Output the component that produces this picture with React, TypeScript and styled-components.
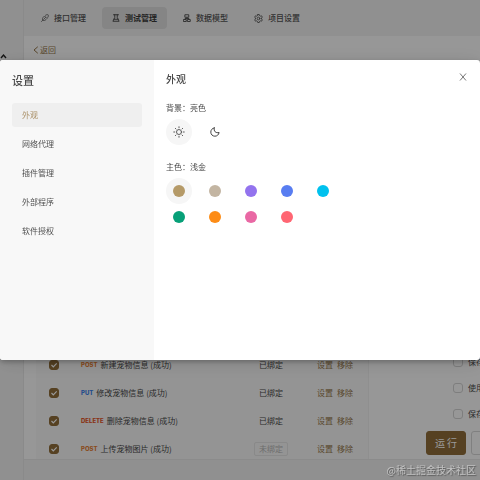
import React, { useState } from "react";
import styled, { createGlobalStyle } from "styled-components";

const GlobalStyle = createGlobalStyle`
  *, *::before, *::after { box-sizing: border-box; }
  body {
    margin: 0;
    overflow: hidden;
    background: #f1f1f1;
    color: #484848;
    font: 8px/12px "Noto Sans CJK SC", "Noto Sans", sans-serif;
  }
  button, input { font: inherit; color: inherit; margin: 0; }
  button { border: 0; padding: 0; background: none; cursor: pointer; }
  h1, h2, h3 { margin: 0; }
  svg { display: block; flex: none; }
`;

const Shell = styled.div`
  display: grid;
  grid-template-columns: 24px minmax(0, 1fr);
  grid-template-rows: minmax(0, 1fr);
  height: 100vh;
`;
const Rail = styled.aside`
  padding-top: 53px;
  border-right: 1px solid #e6e6e6;
`;
const Workspace = styled.div`
  display: grid;
  grid-template-rows: 36px minmax(0, 1fr) 21px;
  min-width: 0;
`;
const TopNav = styled.nav`
  display: flex;
  align-items: center;
  gap: 6px;
  padding-left: 7px;
`;
const NavTab = styled.button<{ $active?: boolean }>`
  display: flex;
  align-items: center;
  gap: 5px;
  height: 22px;
  padding: 0 10px;
  border-radius: 4px;
  white-space: nowrap;
  font-size: 8px;
  font-weight: ${(p) => (p.$active ? 700 : 500)};
  color: ${(p) => (p.$active ? "#3a3a3a" : "#505050")};
  background: ${(p) => (p.$active ? "#dedede" : "transparent")};
`;
const Content = styled.main`
  display: grid;
  grid-template-rows: 28px minmax(0, 1fr);
  background: #fcfcfc;
  overflow: hidden;
`;
const BackLink = styled.a`
  display: flex;
  align-items: center;
  gap: 2px;
  padding-left: 9px;
  color: #94764a;
  text-decoration: none;
`;
const Panels = styled.div`
  display: grid;
  grid-template-columns: minmax(0, 345fr) minmax(0, 111fr);
  grid-template-rows: minmax(0, 1fr);
  min-height: 0;
`;
const StepsPanel = styled.section`
  margin-left: 12px;
  padding-top: 287px;
  background: #f7f7f7;
  border-right: 1px solid #eeeeee;
  overflow: hidden;
`;
const StepTable = styled.table`
  width: 100%;
  table-layout: fixed;
  border-collapse: collapse;
  td { height: 28px; padding: 0; white-space: nowrap; }
`;
const CheckCell = styled.td`
  width: 45px;
  padding-left: 13px !important;
`;
const StatusCell = styled.td`
  width: 63px;
`;
const ActionCell = styled.td`
  width: 51px;
`;
const Check = styled.input`
  appearance: none;
  display: block;
  flex: none;
  width: 10px;
  height: 10px;
  border: 1px solid #d2d2d2;
  border-radius: 3px;
  background: #fcfcfc;
  &:checked {
    border-color: #8f6d3a;
    background: #8f6d3a
      url("data:image/svg+xml,%3Csvg xmlns='http://www.w3.org/2000/svg' viewBox='0 0 8 8'%3E%3Cpath d='M1.5 4l1.8 1.8L6.7 2.4' fill='none' stroke='white' stroke-width='1.2'/%3E%3C/svg%3E")
      center / 8px 8px no-repeat;
  }
`;
const Step = styled.div`
  display: flex;
  align-items: center;
  gap: 3px;
`;
const Method = styled.span<{ $color: string }>`
  font: 800 6px/12px Inter, sans-serif;
  color: ${(p) => p.$color};
`;
const Tag = styled.span<{ $muted?: boolean }>`
  display: inline-block;
  padding: 0 4px;
  line-height: 12px;
  border: 1px solid ${(p) => (p.$muted ? "#e4e4e4" : "transparent")};
  border-radius: 2px;
  color: ${(p) => (p.$muted ? "#b6b6b6" : "#484848")};
`;
const Actions = styled.div`
  display: flex;
  gap: 4px;
`;
const TextButton = styled.button`
  color: #94764a;
`;
const RunPanel = styled.section`
  padding-top: 285px;
  overflow: hidden;
`;
const Option = styled.label`
  display: flex;
  align-items: center;
  gap: 5px;
  height: 26px;
  padding-left: 84px;
  white-space: nowrap;
`;
const RunBar = styled.div`
  display: flex;
  gap: 5px;
  margin-top: 4px;
  padding-left: 57px;
`;
const RunButton = styled.button<{ $primary?: boolean }>`
  flex: none;
  width: 40px;
  height: 24px;
  border: 1px solid ${(p) => (p.$primary ? "#8f6d3a" : "#d6d6d6")};
  border-radius: 3px;
  background: ${(p) => (p.$primary ? "#8f6d3a" : "#fcfcfc")};
  color: ${(p) => (p.$primary ? "#fff" : "#444")};
  font-size: 10px;
`;
const Footer = styled.footer`
  border-top: 1px solid #e8e8e8;
`;

const Backdrop = styled.div`
  position: fixed;
  inset: 0;
  padding-top: 60px;
  background: rgba(0, 0, 0, 0.4);
`;
const Dialog = styled.div`
  display: grid;
  grid-template-columns: 154px minmax(0, 1fr);
  min-height: 300px;
  border-radius: 3px;
  overflow: hidden;
  background: #fff;
  box-shadow: 0 2px 5px rgba(0, 0, 0, 0.25), 0 3px 20px rgba(0, 0, 0, 0.12);
`;
const Sidebar = styled.div`
  padding: 12px 12px 0;
  background: #f8f8f8;
`;
const DialogTitle = styled.h1`
  font-size: 11px;
  line-height: 16px;
  font-weight: 500;
  margin-bottom: 15px;
`;
const Menu = styled.nav`
  display: flex;
  flex-direction: column;
  gap: 5px;
`;
const MenuItem = styled.button<{ $active: boolean }>`
  height: 24px;
  padding: 0 10px;
  border-radius: 3px;
  text-align: left;
  font-size: 8px;
  color: ${(p) => (p.$active ? "#a98f66" : "#505050")};
  background: ${(p) => (p.$active ? "#efefef" : "transparent")};
`;
const Pane = styled.div`
  padding: 12px;
`;
const PaneHead = styled.header`
  display: flex;
  justify-content: space-between;
  align-items: center;
  height: 14px;
`;
const PaneTitle = styled.h2`
  font-size: 10px;
  line-height: 14px;
  font-weight: 500;
`;
const CloseButton = styled.button`
  display: grid;
  place-items: center;
  width: 10px;
  height: 10px;
  margin-top: -4px;
`;
const FieldTitle = styled.h3`
  margin-top: 16px;
  margin-bottom: 5px;
  font-size: 8px;
  line-height: 12px;
  font-weight: 400;
`;
const Choices = styled.div`
  display: grid;
  grid-template-columns: repeat(5, 26px);
  column-gap: 10px;
`;
const Choice = styled.button<{ $active?: boolean }>`
  display: grid;
  place-items: center;
  width: 26px;
  height: 26px;
  border-radius: 50%;
  background: ${(p) => (p.$active ? "#f6f6f6" : "transparent")};
`;
const Swatch = styled.span<{ $color: string }>`
  width: 12px;
  height: 12px;
  border-radius: 50%;
  background: ${(p) => p.$color};
`;
const Watermark = styled.div`
  position: fixed;
  right: 4px;
  bottom: 2px;
  font-size: 10px;
  line-height: 16px;
  color: #c2c2c2;
  text-shadow: 1px 1px 1px #555;
`;

const stroke = { fill: "none", stroke: "currentColor", strokeLinecap: "round", strokeLinejoin: "round" } as const;

const ApiIcon = () => (
  <svg width="8" height="8" viewBox="0 0 16 16" {...stroke} strokeWidth="1.5">
    <path d="M1 15l3-3M4 12c-2-2-1-4 1-6l2-2 5 5-2 2c-2 2-4 3-6 1zM9 2.5c2-1.5 4-1.5 5.3-.8.7 1.3.7 3.3-.8 5.3M6 10l3-3" />
  </svg>
);
const FlaskIcon = () => (
  <svg width="8" height="8" viewBox="0 0 16 16" {...stroke} strokeWidth="1.7">
    <path d="M3 1.5h10M5.5 1.5V7L1.8 14.5h12.4L10.5 7V1.5M4 10.5h8" />
  </svg>
);
const ModelIcon = () => (
  <svg width="8" height="8" viewBox="0 0 16 16" {...stroke} strokeWidth="1.9">
    <path d="M4.5 1.5h7v5h-7zM8 6.5v2.5M4 11V9h8v2M1.5 11h5v4h-5zM9.5 11h5v4h-5z" />
  </svg>
);
const GearIcon = () => (
  <svg width="9" height="9" viewBox="0 0 18 18" {...stroke} strokeWidth="1.7">
    <path d="M7.5 1h3l.6 2.3 1.7 1 2.3-.7 1.5 2.6L15 8v2l1.6 1.8-1.5 2.6-2.3-.7-1.7 1-.6 2.3h-3l-.6-2.3-1.7-1-2.3.7-1.5-2.6L3 10V8L1.4 6.2l1.5-2.6 2.3.7 1.7-1z" />
    <circle cx="9" cy="9" r="2.7" />
  </svg>
);
const SunIcon = () => (
  <svg width="12" height="12" viewBox="0 0 24 24" {...stroke} stroke="#555" strokeWidth="1.9">
    <circle cx="12" cy="12" r="5" />
    <path d="M12 1.5v2M12 20.5v2M1.5 12h2M20.5 12h2M4.6 4.6L6 6M18 18l1.4 1.4M19.4 4.6L18 6M6 18l-1.4 1.4" />
  </svg>
);
const MoonIcon = () => (
  <svg width="10" height="10" viewBox="0 0 20 20" {...stroke} stroke="#444" strokeWidth="2">
    <path d="M8.5 1.8C6.8 8.5 11.5 12.8 18.2 11 17.4 15.6 14 18.4 9.8 18.4 5 18.4 1.6 14.8 1.6 10.2 1.6 6 4.2 2.6 8.5 1.8z" />
  </svg>
);

const tabs = [
  { label: "接口管理", Icon: ApiIcon },
  { label: "测试管理", Icon: FlaskIcon, active: true },
  { label: "数据模型", Icon: ModelIcon },
  { label: "项目设置", Icon: GearIcon },
];
const steps = [
  { method: "POST", color: "#e57f35", name: "新建宠物信息 (成功)", bound: true },
  { method: "PUT", color: "#3a80e8", name: "修改宠物信息 (成功)", bound: true },
  { method: "DELETE", color: "#e4552a", name: "删除宠物信息 (成功)", bound: true },
  { method: "POST", color: "#e57f35", name: "上传宠物图片 (成功)", bound: false },
];
const options = ["保存请求", "使用全局", "保存变量"];
const menu = ["外观", "网络代理", "插件管理", "外部程序", "软件授权"];
const colors = [
  { name: "浅金", value: "#b59a68" },
  { name: "浅灰", value: "#c3b5a2" },
  { name: "紫色", value: "#9373ee" },
  { name: "蓝色", value: "#587df1" },
  { name: "青色", value: "#00c1ee" },
  { name: "绿色", value: "#07a078" },
  { name: "橙色", value: "#fd8c16" },
  { name: "粉色", value: "#e968a4" },
  { name: "红色", value: "#ff6673" },
];

export default function App() {
  const [section, setSection] = useState("外观");
  const [dark, setDark] = useState(false);
  const [accent, setAccent] = useState("浅金");

  return (
    <>
      <GlobalStyle />
      <Shell>
        <Rail>
          <svg width="7" height="6" viewBox="0 0 7 6" fill="none" stroke="#222" strokeWidth="1.4">
            <path d="M1 5l2.5-3L6 5" />
          </svg>
        </Rail>
        <Workspace>
          <TopNav>
            {tabs.map(({ label, Icon, active }) => (
              <NavTab key={label} $active={active}>
                <Icon />
                {label}
              </NavTab>
            ))}
          </TopNav>
          <Content>
            <BackLink href="#">
              <svg width="5" height="8" viewBox="0 0 5 8" {...stroke}>
                <path d="M4.5 1L1 4l3.5 3" />
              </svg>
              返回
            </BackLink>
            <Panels>
              <StepsPanel>
                <StepTable>
                  <tbody>
                    {steps.map((s) => (
                      <tr key={s.name}>
                        <CheckCell>
                          <Check type="checkbox" defaultChecked aria-label={s.name} />
                        </CheckCell>
                        <td>
                          <Step>
                            <Method $color={s.color}>{s.method}</Method>
                            {s.name}
                          </Step>
                        </td>
                        <StatusCell>
                          <Tag $muted={!s.bound}>{s.bound ? "已绑定" : "未绑定"}</Tag>
                        </StatusCell>
                        <ActionCell>
                          <Actions>
                            <TextButton>设置</TextButton>
                            <TextButton>移除</TextButton>
                          </Actions>
                        </ActionCell>
                      </tr>
                    ))}
                  </tbody>
                </StepTable>
              </StepsPanel>
              <RunPanel>
                {options.map((o) => (
                  <Option key={o}>
                    <Check type="checkbox" />
                    {o}
                  </Option>
                ))}
                <RunBar>
                  <RunButton $primary>运 行</RunButton>
                  <RunButton aria-label="保存" />
                </RunBar>
              </RunPanel>
            </Panels>
          </Content>
          <Footer />
        </Workspace>
      </Shell>

      <Backdrop>
        <Dialog role="dialog" aria-modal="true" aria-labelledby="settings-title">
          <Sidebar>
            <DialogTitle id="settings-title">设置</DialogTitle>
            <Menu>
              {menu.map((m) => (
                <MenuItem key={m} $active={m === section} onClick={() => setSection(m)}>
                  {m}
                </MenuItem>
              ))}
            </Menu>
          </Sidebar>
          <Pane>
            <PaneHead>
              <PaneTitle>{section}</PaneTitle>
              <CloseButton aria-label="关闭">
                <svg width="8" height="8" viewBox="0 0 8 8" fill="none" stroke="#777">
                  <path d="M1 .5l6 7M7 .5l-6 7" />
                </svg>
              </CloseButton>
            </PaneHead>
            <FieldTitle>背景：{dark ? "暗色" : "亮色"}</FieldTitle>
            <Choices>
              <Choice $active={!dark} aria-label="亮色" onClick={() => setDark(false)}>
                <SunIcon />
              </Choice>
              <Choice $active={dark} aria-label="暗色" onClick={() => setDark(true)}>
                <MoonIcon />
              </Choice>
            </Choices>
            <FieldTitle>主色：{accent}</FieldTitle>
            <Choices>
              {colors.map((c) => (
                <Choice key={c.name} $active={c.name === accent} aria-label={c.name} onClick={() => setAccent(c.name)}>
                  <Swatch $color={c.value} />
                </Choice>
              ))}
            </Choices>
          </Pane>
        </Dialog>
      </Backdrop>
      <Watermark>@稀土掘金技术社区</Watermark>
    </>
  );
}
